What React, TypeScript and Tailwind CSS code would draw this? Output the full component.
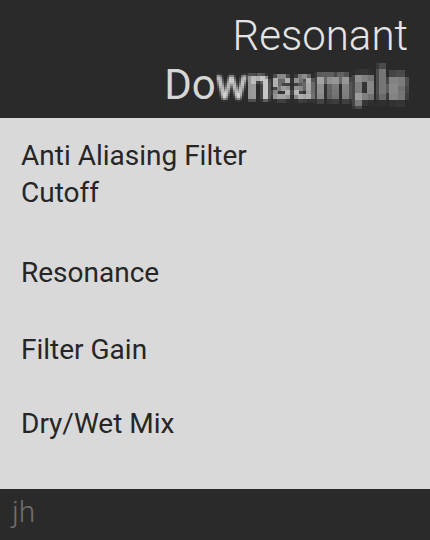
import React from 'react';

const params = [
  { label: 'Anti Aliasing Filter\nCutoff', mt: 'mt-0' },
  { label: 'Resonance', mt: 'mt-[43px]' },
  { label: 'Filter Gain', mt: 'mt-[40px]' },
  { label: 'Dry/Wet Mix', mt: 'mt-[37px]' },
];

// pixel sizes used for the "downsampled" letters
const sizes = [2, 3, 4, 5, 6, 7];

const PixelFilters = () => (
  <svg width="0" height="0" className="absolute">
    <defs>
      {sizes.map((n) => (
        <filter key={n} id={`px${n}`} x="0" y="0" width="1" height="1">
          <feGaussianBlur in="SourceGraphic" stdDeviation={n / 2.5} result="b" />
          <feFlood x="0" y="0" width="1" height="1" floodColor="#fff" />
          <feComposite width={n} height={n} />
          <feTile result="grid" />
          <feComposite in="b" in2="grid" operator="in" />
          <feMorphology operator="dilate" radius={n / 2} />
        </filter>
      ))}
    </defs>
  </svg>
);

const letters: { ch: string; f: string }[] = [
  { ch: 'D', f: '' },
  { ch: 'o', f: '' },
  { ch: 'w', f: '[filter:url(#px2)]' },
  { ch: 'n', f: '[filter:url(#px3)]' },
  { ch: 's', f: '[filter:url(#px4)]' },
  { ch: 'a', f: '[filter:url(#px4)]' },
  { ch: 'm', f: '[filter:url(#px5)]' },
  { ch: 'p', f: '[filter:url(#px6)]' },
  { ch: 'l', f: '[filter:url(#px6)]' },
  { ch: 'e', f: '[filter:url(#px7)]' },
];

export default function App() {
  return (
    <div className="flex h-[540px] w-[430px] flex-col font-['Roboto',sans-serif]">
      <PixelFilters />

      {/* Title */}
      <div className="flex h-[118px] flex-col items-end bg-[#2a2a2a] pt-[11px] pr-[22px]">
        <div className="text-[42px] leading-[49px] font-light text-[#e4e4e4]">Resonant</div>
        <div className="flex text-[42px] leading-[49px] text-[#d6d6d6]">
          {letters.map((l, i) => (
            <span key={i} className={`inline-block ${l.f}`}>
              {l.ch}
            </span>
          ))}
        </div>
      </div>

      {/* Params */}
      <div className="flex flex-1 flex-col bg-[#d9d9d9] px-[21px] pt-[19px]">
        {params.map((p) => (
          <div
            key={p.label}
            className={`${p.mt} text-[28px] leading-[37px] whitespace-pre-line text-[#262626]`}
          >
            {p.label}
          </div>
        ))}
      </div>

      {/* Footer */}
      <div className="flex h-[51px] items-start bg-[#2a2a2a] px-[12px] pt-[8px]">
        <span className="text-[30px] leading-[30px] font-light text-[#6e6e6e]">jh</span>
      </div>
    </div>
  );
}
